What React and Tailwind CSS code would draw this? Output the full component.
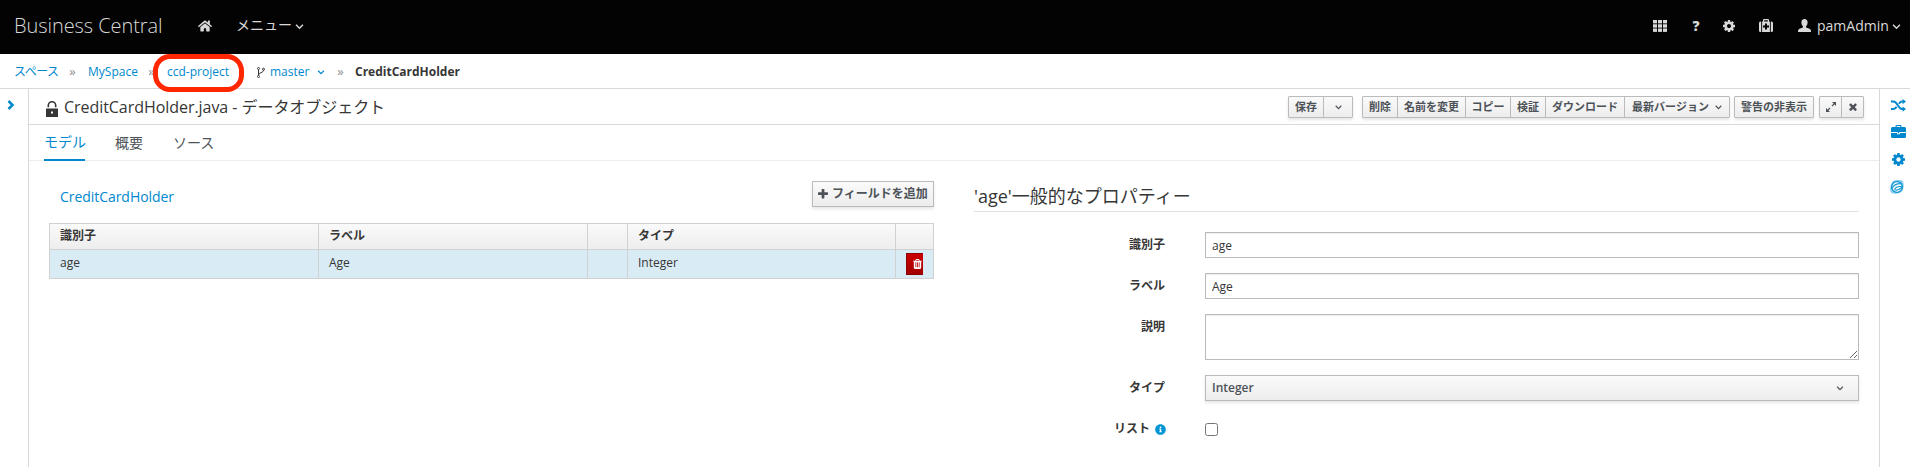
import { FaHome, FaInfoCircle } from "react-icons/fa";

const Glyph = ({ d, className = "", box = "0 0 1792 1792" }) => (
  <svg viewBox={box} className={className} fill="currentColor"><path fillRule="evenodd" d={d} /></svg>
);
const COG = "M1152 896q0-106-75-181t-181-75-181 75-75 181 75 181 181 75 181-75 75-181zm512-109v222q0 12-8 23t-20 13l-185 28q-19 54-39 91 35 50 107 138 10 12 10 25t-9 23q-27 37-99 108t-94 71q-12 0-26-9l-138-108q-44 23-91 38-16 136-29 186-7 28-36 28h-222q-14 0-24.500-8.500t-11.500-21.500l-28-184q-49-16-90-37l-141 107q-10 9-25 9-14 0-25-11-126-114-165-168-7-10-7-23 0-12 8-23 15-21 51-66.500t54-70.500q-27-50-41-99l-183-27q-13-2-21-12.500t-8-23.500v-222q0-12 8-23t19-13l186-28q14-46 39-92-40-57-107-138-10-12-10-24 0-10 9-23 26-36 98.500-107.500t94.500-71.500q13 0 26 10l138 107q44-23 91-38 16-136 29-186 7-28 36-28h222q14 0 24.500 8.500t11.500 21.500l28 184q49 16 90 37l142-107q9-9 24-9 13 0 25 10 129 119 165 170 7 8 7 22 0 12-8 23-15 21-51 66.500t-54 70.500q26 50 41 98l183 28q13 2 21 12.500t8 23.500z";
const TIMES = "M1490 1322q0 40-28 68l-136 136q-28 28-68 28t-68-28l-294-294-294 294q-28 28-68 28t-68-28l-136-136q-28-28-28-68t28-68l294-294-294-294q-28-28-28-68t28-68l136-136q28-28 68-28t68 28l294 294 294-294q28-28 68-28t68 28l136 136q28 28 28 68t-28 68l-294 294 294 294q28 28 28 68z";
const PLUS = "M1600 736v192q0 40-28 68t-68 28h-416v416q0 40-28 68t-68 28h-192q-40 0-68-28t-28-68v-416h-416q-40 0-68-28t-28-68v-192q0-40 28-68t68-28h416v-416q0-40 28-68t68-28h192q40 0 68 28t28 68v416h416q40 0 68 28t28 68z";
const TRASH = "M704 1376v-704q0-14-9-23t-23-9h-64q-14 0-23 9t-9 23v704q0 14 9 23t23 9h64q14 0 23-9t9-23zm256 0v-704q0-14-9-23t-23-9h-64q-14 0-23 9t-9 23v704q0 14 9 23t23 9h64q14 0 23-9t9-23zm256 0v-704q0-14-9-23t-23-9h-64q-14 0-23 9t-9 23v704q0 14 9 23t23 9h64q14 0 23-9t9-23zm-544-992h448l-48-117q-7-9-17-11h-317q-10 2-17 11zm928 32v64q0 14-9 23t-23 9h-96v948q0 83-47 143.500t-113 60.500h-832q-66 0-113-58.500t-47-141.500v-952h-96q-14 0-23-9t-9-23v-64q0-14 9-23t23-9h309l70-167q15-37 54-63t79-26h320q40 0 79 26t54 63l70 167h309q14 0 23 9t9 23z";

const Chevron = ({ className = "" }) => (
  <svg viewBox="0 0 10 7" className={className} fill="none" stroke="currentColor" strokeWidth="1.7">
    <path d="M1 1l4 4 4-4" />
  </svg>
);

const Grid = () => (
  <svg width="14" height="12" viewBox="0 0 14 12" fill="currentColor">
    {[0, 5, 10].map((x) => [0, 4.25, 8.5].map((y) => <rect key={`${x}-${y}`} x={x} y={y} width="4" height="3.4" />))}
  </svg>
);

const Medkit = () => (
  <svg width="14" height="13" viewBox="0 0 14 13" fill="currentColor">
    <path fillRule="evenodd" d="M4 2.5V1a1 1 0 0 1 1-1h4a1 1 0 0 1 1 1v1.5h.9V13H3.1V2.500zM5.200 1.200v1.300h3.600V1.200zM6 4.600v2H4v2h2v2h2v-2h2v-2H8v-2z" />
    <path d="M2.200 2.500H1.500A1.500 1.500 0 0 0 0 4v7.500A1.500 1.500 0 0 0 1.500 13h.7zM11.800 2.500h.7A1.500 1.500 0 0 1 14 4v7.500a1.500 1.500 0 0 1-1.500 1.500h-.7z" />
  </svg>
);

const User = () => (
  <svg width="13" height="13" viewBox="0 0 13 13" fill="currentColor">
    <path d="M6.500 0C8.500 0 9.600 1.300 9.600 3.200c0 1.700-.6 3.300-1.500 4.100v1.200l3.400 1.300c1 .4 1.500 1.300 1.500 3.200H0c0-1.900.5-2.800 1.500-3.200l3.400-1.300V7.300C4 6.500 3.400 4.900 3.400 3.200 3.400 1.300 4.500 0 6.500 0z" />
  </svg>
);

const Lock = () => (
  <svg width="12" height="16" viewBox="0 0 12 16" fill="currentColor" className="mt-[4px] ml-[17px]">
    <path d="M2.300 6.200V4.500a3.700 3.700 0 0 1 7.400 0v1.700" fill="none" stroke="currentColor" strokeWidth="1.600" />
    <path fillRule="evenodd" d="M.5 7.500h11q.5 0 .5.500v7.500q0 .5-.5.500H.5q-.5 0-.5-.5V8q0-.5.5-.5zM5 10.500v2h2v-2z" />
  </svg>
);

const Branch = () => (
  <svg width="8" height="11" viewBox="0 0 8 11" fill="none" stroke="currentColor" strokeWidth="1">
    <circle cx="1.500" cy="1.500" r="1" />
    <circle cx="6.500" cy="2.200" r="1" />
    <circle cx="1.500" cy="9.500" r="1" />
    <path d="M1.500 2.500v6M6.500 3.200c0 3-5 2-5 4.800" />
  </svg>
);

const Shuffle = () => (
  <svg width="15" height="13" viewBox="0 0 15 13" fill="currentColor">
    <path d="M0 2.500h2.500C6.500 2.500 7 10 11 10h1M0 10h2.500c1.500 0 2.400-1 3.100-2.300M7.900 4.800C8.600 3.500 9.500 2.500 11 2.500h1" fill="none" stroke="currentColor" strokeWidth="1.900" />
    <path d="M11.600 0 15 2.600l-3.400 2.700zM11.600 7.500 15 10.100l-3.400 2.700z" />
  </svg>
);

const Briefcase = () => (
  <svg width="15" height="13" viewBox="0 0 15 13" fill="currentColor">
    <path fillRule="evenodd" d="M4.500 2V1q0-1 1-1h4q1 0 1 1v1h3q1.500 0 1.500 1.500V7H0V3.500Q0 2 1.500 2zM5.700 2h3.600V1.100H5.700z" />
    <path d="M0 7.900h6v1.300h3V7.900h6v3.600q0 1.500-1.500 1.500h-12Q0 13 0 11.500z" />
    <path d="M6.800 7h1.400v1.400H6.800z" />
  </svg>
);

const Expand = () => (
  <svg width="10" height="10" viewBox="0 0 10 10" fill="currentColor">
    <path d="M6 0h4v4zM0 6l4 4H0z" />
    <path d="M8.500 1.500 5.900 4.100M1.500 8.500l2.600-2.600" stroke="currentColor" strokeWidth="1.200" />
  </svg>
);

const Globe = () => (
  <svg width="14" height="14" viewBox="0 0 14 14">
    <path d="M4.500.6Q11.500-.6 13 1.200 14.300 4 13.200 9 12 13 7 13.500 2 14.200.8 12.600-.5 10 .8 5 2 1 4.500.6z" fill="#8fd0ee" />
    <circle cx="7" cy="7" r="5.400" fill="#fff" stroke="#1c9cd4" strokeWidth="1.500" />
    <path d="M2 8.500C3.500 5 7 3.200 12 3.600M4.500 9.600C5.500 7 8.500 6.200 12 6.600M4.800 9.800C7.500 10.800 9.500 9.500 12 7.200" fill="none" stroke="#1c9cd4" strokeWidth="1.200" />
  </svg>
);

const Sep = () => <span className="w-[7px] text-center text-[13px] text-[#8b8d8f]">»</span>;

const btn = "flex h-full items-center justify-center border-[#bbb] text-[11px] font-bold text-[#4d5258] whitespace-nowrap";
const group = "flex h-[22px] rounded-[1px] border border-[#bbb] bg-linear-to-b from-[#fafafa] to-[#ededed] shadow-[0_2px_3px_rgba(3,3,3,0.1)]";
const field = "w-[654px] border border-[#bbb] bg-white px-[6px] text-xs shadow-[inset_0_1px_1px_rgba(3,3,3,0.075)] outline-none";

function Row({ label, children, className }) {
  return (
    <div className={`flex ${className}`}>
      <div className="mr-10 flex h-[26px] w-[191px] items-center justify-end gap-[6px] text-xs font-bold">{label}</div>
      {children}
    </div>
  );
}

export default function App() {
  return (
    <div className="flex h-[467px] w-[1910px] flex-col overflow-hidden bg-white font-['Open_Sans','Noto_Sans_CJK_JP',sans-serif] text-xs text-[#363636]">
      <header className="flex h-[54px] shrink-0 items-center bg-[#030303] pb-[3px] text-[#d9d9d9]">
        <div className="ml-[14px] w-[184px] pt-[1px] text-[20px] font-light tracking-[-0.07px] whitespace-nowrap">Business Central</div>
        <FaHome className="h-[14px] w-[14px]" />
        <div className="ml-[24px] flex items-center gap-[4px] text-sm">
          <span className="w-[55px] pb-[1px] whitespace-nowrap">メニュー</span>
          <Chevron className="mt-[2px] h-[6px] w-[9px]" />
        </div>
        <div className="ml-auto flex items-center pr-[9px]">
          <Grid />
          <span className="ml-[24px] w-[10px] text-center text-sm font-extrabold">?</span>
          <Glyph d={COG} box="128 128 1536 1536" className="ml-[22px] h-3 w-3" />
          <span className="ml-[24px]"><Medkit /></span>
          <span className="ml-[25px]"><User /></span>
          <span className="ml-[6px] w-[73px] text-sm">pamAdmin</span>
          <Chevron className="mt-[2px] ml-[2px] h-[6px] w-[9px]" />
        </div>
      </header>

      <nav className="relative flex h-[35px] shrink-0 items-center border-b border-[#d9d9d9] pt-[2px] text-[#0088ce]">
        <span className="ml-[14px] w-[55px] tracking-[-0.5px] whitespace-nowrap">スペース</span>
        <Sep />
        <span className="ml-[12px] w-[60px]">MySpace</span>
        <Sep />
        <span className="ml-[12px] w-[90px]">ccd-project</span>
        <span className="w-[13px] text-[#363636]"><Branch /></span>
        <span className="w-[47px]">master</span>
        <Chevron className="mt-[1px] h-[5px] w-[8px]" />
        <span className="ml-[12px] flex"><Sep /></span>
        <span className="ml-[11px] font-bold text-[#363636]">CreditCardHolder</span>
        <div className="absolute top-0 left-[153px] h-[38px] w-[91px] rounded-[17px] border-[5px] border-[#ff2600]" />
      </nav>

      <div className="flex min-h-0 flex-1">
        <aside className="flex w-[29px] shrink-0 justify-center border-r border-[#d9d9d9] pr-[6px] text-[#0088ce]">
          <svg width="8" height="10" viewBox="0 0 8 10" fill="none" stroke="currentColor" strokeWidth="2.500" className="mt-[11px]"><path d="M1.500 1l4 4-4 4" /></svg>
        </aside>

        <main className="flex w-[1850px] shrink-0 flex-col">
          <div className="flex h-[36px] items-center border-b border-[#d9d9d9]">
            <Lock />
            <h1 className="ml-[6px] text-base tracking-[-0.05px]">CreditCardHolder.java - データオブジェクト</h1>
            <div className="mr-[15px] ml-auto flex pt-[1px]">
              <div className={`${group} mr-[9px]`}>
                <button className={`${btn} w-[35px] border-r`}>保存</button>
                <button className={`${btn} w-[28px]`}><Chevron className="h-[5px] w-[7px]" /></button>
              </div>
              <div className={`${group} mr-[4px]`}>
                <button className={`${btn} w-[35px] border-r`}>削除</button>
                <button className={`${btn} w-[68px] border-r`}>名前を変更</button>
                <button className={`${btn} w-[45px] border-r`}>コピー</button>
                <button className={`${btn} w-[35px] border-r`}>検証</button>
                <button className={`${btn} w-[79px] border-r`}>ダウンロード</button>
                <button className={`${btn} w-[104px] gap-[6px]`}>最新バージョン<Chevron className="h-[5px] w-[7px]" /></button>
              </div>
              <div className={`${group} mr-[5px]`}>
                <button className={`${btn} w-[78px]`}>警告の非表示</button>
              </div>
              <div className={group}>
                <button className={`${btn} w-[22px] border-r`}><Expand /></button>
                <button className={`${btn} w-[21px]`}><Glyph d={TIMES} box="300 300 1192 1256" className="h-[8px] w-[8px]" /></button>
              </div>
            </div>
          </div>

          <div className="flex h-[36px] border-b border-[#ededed] pl-[15px] text-sm text-[#4d5258]">
            <div className="mr-[30px] flex h-[36px] w-[41px] items-center border-b-2 border-[#0088ce] whitespace-nowrap text-[#0088ce]">モデル</div>
            <div className="mr-[30px] flex items-center">概要</div>
            <div className="flex items-center">ソース</div>
          </div>

          <div className="flex">
            <section className="ml-5 w-[885px]">
              <div className="mt-[20px] flex h-[26px] items-center justify-between">
                <span className="mt-[6px] ml-[11px] text-sm tracking-[-0.05px] text-[#0088ce]">CreditCardHolder</span>
                <button className="flex h-[26px] w-[122px] items-center justify-center gap-1 border border-[#bbb] bg-linear-to-b from-[#fafafa] to-[#ededed] font-bold whitespace-nowrap text-[#4d5258] shadow-[0_2px_3px_rgba(3,3,3,0.1)]">
                  <Glyph d={PLUS} box="192 192 1408 1408" className="h-[10px] w-[10px]" />フィールドを追加
                </button>
              </div>
              <table className="mt-[16px] w-[885px] table-fixed border-collapse border border-[#d1d1d1] text-left">
                <colgroup><col className="w-[269px]" /><col className="w-[269px]" /><col className="w-[40px]" /><col className="w-[268px]" /><col className="w-[38px]" /></colgroup>
                <thead>
                  <tr className="h-[26px] bg-linear-to-b from-[#fafafa] to-[#ededed]">
                    {["識別子", "ラベル", "", "タイプ", ""].map((h, i) => <th key={i} className="border border-[#d1d1d1] px-[10px] py-0 pb-[2px] leading-4">{h}</th>)}
                  </tr>
                </thead>
                <tbody>
                  <tr className="h-[29px] bg-[#d9ecf5]">
                    {["age", "Age", "", "Integer"].map((c, i) => <td key={i} className="border border-[#d1d1d1] px-[10px] py-0 pb-[2px] leading-4">{c}</td>)}
                    <td className="border border-[#d1d1d1] p-0 pl-[10px]">
                      <span className="flex h-[22px] w-[17px] items-center justify-end border-t border-b border-l border-[#8b0000] bg-linear-to-b from-[#cc0000] to-[#a30000] pr-[1px] text-white">
                        <Glyph d={TRASH} box="192 128 1408 1536" className="h-[10px] w-[9px]" />
                      </span>
                    </td>
                  </tr>
                </tbody>
              </table>
            </section>

            <section className="ml-10 w-[885px]">
              <h2 className="mt-[20px] h-[31px] border-b border-[#e0e0e0] text-lg leading-[30px]">'age'一般的なプロパティー</h2>
              <Row className="mt-[20px]" label="識別子"><input className={`${field} h-[26px]`} defaultValue="age" /></Row>
              <Row className="mt-[15px]" label="ラベル"><input className={`${field} h-[26px]`} defaultValue="Age" /></Row>
              <Row className="mt-[15px]" label="説明"><textarea className={`${field} h-[46px] resize`} /></Row>
              <Row className="mt-[15px]" label="タイプ">
                <button className="flex h-[26px] w-[654px] items-center justify-between border border-[#bbb] bg-linear-to-b from-[#fafafa] to-[#ededed] pr-[14px] pl-[6px] font-semibold text-[#4d5258] shadow-[0_2px_3px_rgba(3,3,3,0.1)]">
                  Integer<Chevron className="h-[5px] w-[8px]" />
                </button>
              </Row>
              <Row className="mt-[15px]" label={<><span className="-mr-[1px]">リスト</span><FaInfoCircle className="-mr-[1px] h-[11px] w-[11px] text-[#0095d3]" /></>}>
                <input type="checkbox" className="mt-[7px] h-[13px] w-[13px]" />
              </Row>
            </section>
          </div>
        </main>

        <aside className="flex flex-1 flex-col items-center border-l border-[#d9d9d9] pt-[10px] pl-[7px] text-[#0088ce]">
          <Shuffle />
          <span className="mt-[13px]"><Briefcase /></span>
          <Glyph d={COG} box="128 128 1536 1536" className="mt-[15px] h-[13px] w-[13px]" />
          <span className="mt-[14px] mr-[3px]"><Globe /></span>
        </aside>
      </div>
    </div>
  );
}
